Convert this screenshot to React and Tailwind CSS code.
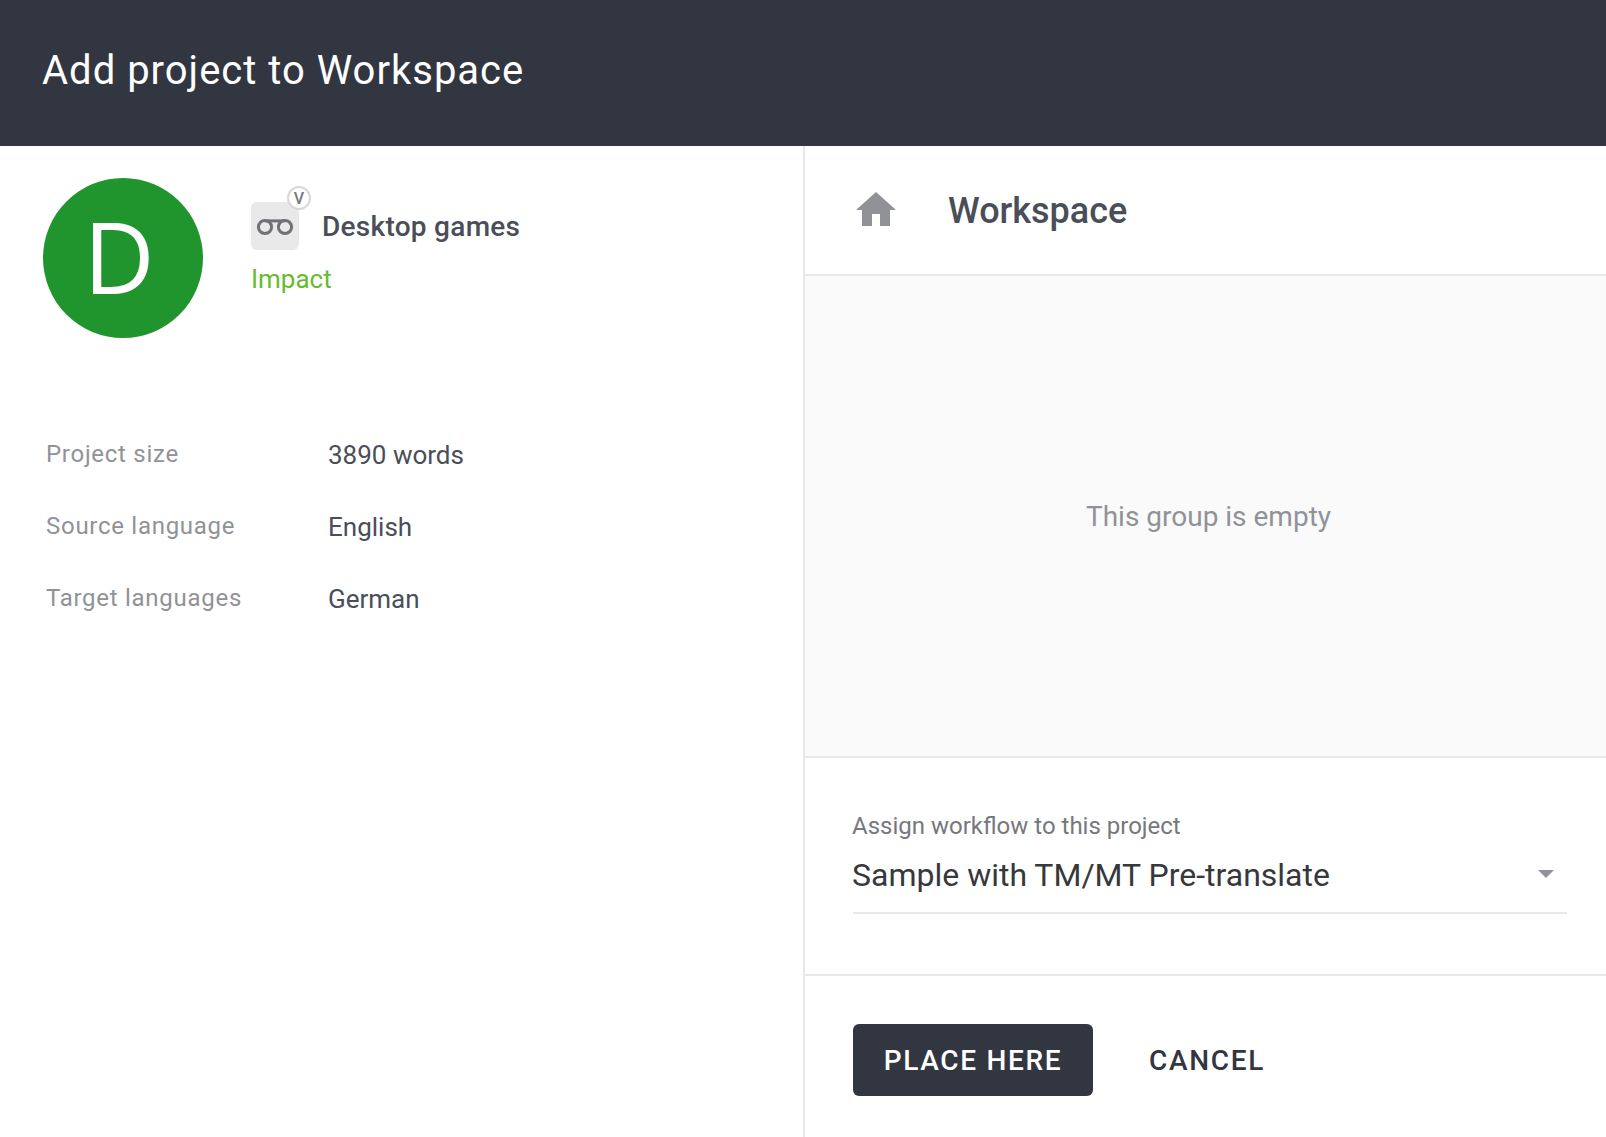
function Row({ label, value }) {
  return (
    <tr className="h-18">
      <th scope="row" className="w-[282px] p-0 text-left align-middle text-2xl leading-8 font-normal tracking-[0.03em] text-[#919297]">{label}</th>
      <td className="p-0 pt-0.5 align-middle text-[26px] leading-8 text-[#4a4e59]">{value}</td>
    </tr>
  );
}

export default function App() {
  return (
    <div className="flex min-h-screen flex-col bg-white font-[Roboto,sans-serif]">
      <header className="flex h-[146px] items-center bg-[#323640] px-[42px] pb-1">
        <h1 className="text-[40px] leading-[48px] font-normal tracking-[1px] text-white">Add project to Workspace</h1>
      </header>
      <main className="grid flex-1 grid-cols-2">
        <section className="pt-8 pl-[43px]">
          <div className="flex">
            <div className="flex size-40 items-center justify-center rounded-full bg-[#21952d] pr-2 pb-1 font-['Open_Sans',sans-serif] text-[98px] leading-none text-white">D</div>
            <div className="ml-12 pt-6">
              <div className="flex items-center gap-[23px]">
                <div className="relative size-12 rounded-md bg-[#e9e9e9]">
                  <svg viewBox="0 0 48 48" className="size-12" fill="none" stroke="#707176" strokeWidth="3">
                    <circle cx="14" cy="25" r="6.6" />
                    <circle cx="34" cy="25" r="6.6" />
                    <path d="M14 18.9h20" />
                  </svg>
                  <span className="absolute -top-4 -right-3 flex size-6 items-center justify-center rounded-full border-2 border-[#d8d8d8] bg-white pt-0.5 text-base leading-none font-medium text-[#77787c]">V</span>
                </div>
                <h2 className="pt-0.5 text-[28px] leading-9 font-medium tracking-[0.01em] text-[#4a4e59]">Desktop games</h2>
              </div>
              <p className="mt-[11px] text-[26px] leading-9 text-[#68bb2e]">Impact</p>
            </div>
          </div>
          <table className="mt-20 ml-[3px] border-collapse">
            <tbody>
              <Row label="Project size" value="3890 words" />
              <Row label="Source language" value="English" />
              <Row label="Target languages" value="German" />
            </tbody>
          </table>
        </section>
        <section className="flex flex-col border-l-2 border-[#e8e8e8]">
          <div className="flex h-[130px] items-center border-b-2 border-[#e8e8e8] pl-[47px]">
            <svg viewBox="0 0 24 24" className="size-12" fill="#919297"><path d="M10 20v-6h4v6h5v-8h3L12 3 2 12h3v8z" /></svg>
            <h2 className="ml-12 pt-0.5 text-4xl font-medium text-[#4a4e59]">Workspace</h2>
          </div>
          <div className="flex flex-1 items-center justify-center border-b-2 border-[#e8e8e8] bg-[#fafafa] pt-0.5 pl-1.5">
            <p className="text-[28px] leading-9 text-[#919297]">This group is empty</p>
          </div>
          <div className="flex h-[218px] flex-col border-b-2 border-[#e8e8e8] pt-[52px] pr-[39px] pl-12">
            <label htmlFor="workflow" className="-ml-px text-2xl leading-8 text-[#77787c]">Assign workflow to this project</label>
            <div className="relative border-b-2 border-[#e8e8e8] pb-1">
              <select id="workflow" className="-ml-px h-[66px] w-full appearance-none bg-transparent text-[32px] text-[#37383c]">
                <option>Sample with TM/MT Pre-translate</option>
              </select>
              <svg viewBox="0 0 16 8" className="pointer-events-none absolute top-7 right-[13px] h-2 w-4" fill="#919297"><path d="M0 0h16L8 8z" /></svg>
            </div>
          </div>
          <div className="flex h-[161px] items-start gap-6 pt-12 pl-12">
            <button type="button" className="h-18 w-60 rounded-md bg-[#323640] pt-0.5 text-[28px] font-medium tracking-[0.06em] text-white">PLACE HERE</button>
            <button type="button" className="h-18 px-8 pt-0.5 text-[28px] font-medium tracking-[0.06em] text-[#323640]">CANCEL</button>
          </div>
        </section>
      </main>
    </div>
  );
}
